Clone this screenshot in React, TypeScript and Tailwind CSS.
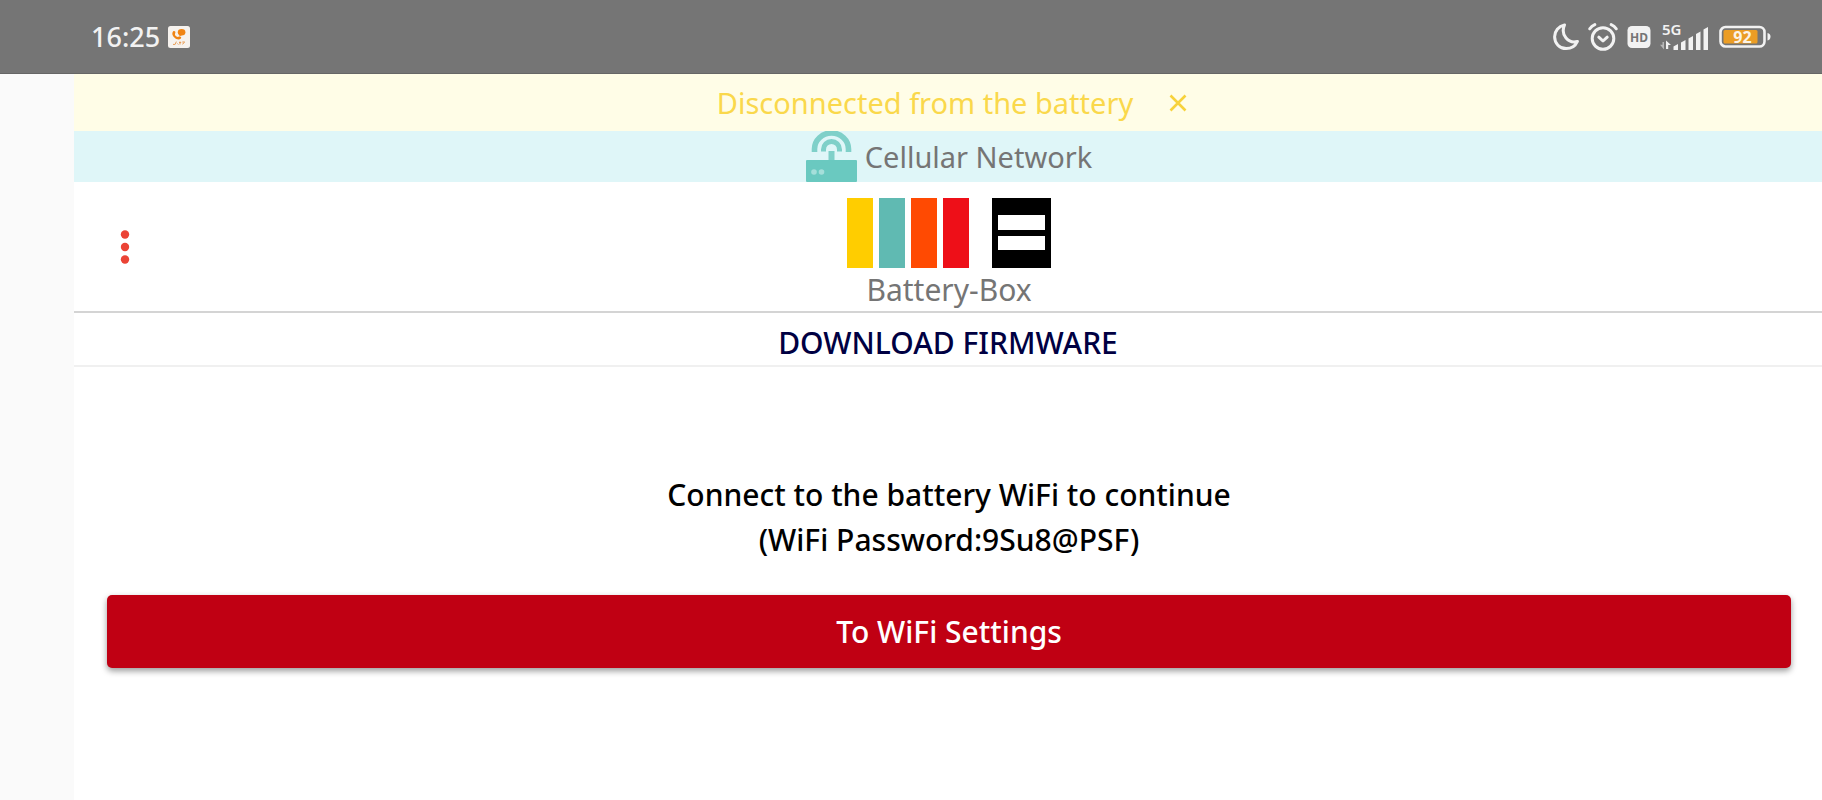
import React from "react";

function CallAppIcon() {
  return (
    <svg width="22" height="22" viewBox="0 0 22 22" role="img" aria-label="Call notification">
      <rect width="22" height="22" rx="2.500" fill="#f6f2ee" />
      <ellipse cx="13.600" cy="6.300" rx="3.800" ry="3.200" fill="#f08414" />
      <path d="M5 5.400c1.500-.9 2.800.2 2.300 1.500-.8 1.200-.3 2.700 1.200 3.700 1 .8 1.800.3 3-.1 1.500-.2 2.200 1.100 1.400 2-1.800 1.500-4.500 1-6.300-.8C4.300 9.800 3.600 7 5 5.400Z" fill="#f08414" />
      <path d="M12 8.500l-1.200 2 3-1.200Z" fill="#f08414" />
      <path d="M5 18.400h2.200M8.300 15.600l-1 2.600M9.500 17.500l.8 1M11 16.500h2.200M12 15.500v3M14.300 16h2.500M14.300 18.200l2.200-1.700" stroke="#e89a50" strokeWidth="1" fill="none" />
    </svg>
  );
}

function MoonIcon() {
  return (
    <svg width="26" height="28" viewBox="0 0 26 28" fill="none" role="img" aria-label="Do not disturb">
      <path d="M11.500 2C5.500 3.200 1.600 8 1.600 13.800c0 6.600 5 11.800 11.600 11.800 5 0 9.200-2.700 11.200-7.200-8.700 2.600-17.300-6.200-12.900-16.400Z" stroke="#f2f2f2" strokeWidth="3" strokeLinejoin="round" />
    </svg>
  );
}

function AlarmIcon() {
  return (
    <svg width="30" height="28" viewBox="0 0 30 28" fill="none" stroke="#f2f2f2" strokeLinecap="round" strokeLinejoin="round" role="img" aria-label="Alarm">
      <circle cx="15" cy="15.500" r="10.800" strokeWidth="3" />
      <path d="M10.800 14.200l4.200 3.800 4.200-3.800" strokeWidth="3" />
      <path d="M1.800 5.800C3 3.800 4.600 2.500 6.800 1.600M28.200 5.800C27 3.800 25.400 2.500 23.200 1.600" strokeWidth="3" />
    </svg>
  );
}

function HdIcon() {
  return (
    <svg width="24" height="22" viewBox="0 0 24 22" role="img" aria-label="HD voice">
      <rect x="0.500" width="23" height="22" rx="4.500" fill="#f2f2f2" />
      <text x="12" y="15.500" textAnchor="middle" fontSize="12" fontWeight="700" fill="#757575">HD</text>
    </svg>
  );
}

function SignalIcon() {
  return (
    <svg width="50" height="34" viewBox="0 -4 50 34" role="img" aria-label="5G signal">
      <text x="2" y="11" fontSize="15" fontWeight="600" fill="#f2f2f2">5G</text>
      <path d="M4 18v7.500L0 20.800h2.500V18Z" fill="#b8b8b8" />
      <path d="M6 25v-8.500l5 4.500H8.200v4Z" fill="#f2f2f2" />
      <g fill="#f2f2f2">
        <path d="M13.500 22.500l4.500-2.500v6h-4.500Z" />
        <path d="M21 18.500l4.500-2.500v10h-4.500Z" />
        <path d="M28.500 14.500l4.500-2.500v14h-4.500Z" />
        <path d="M36 10l4.500-2.500v18.500h-4.500Z" />
        <path d="M43.500 5.500l4.500-2.500v23h-4.500Z" />
      </g>
    </svg>
  );
}

function BatteryIcon() {
  return (
    <svg width="52" height="24" viewBox="0 0 52 24" role="img" aria-label="Battery 92 percent">
      <rect x="1.500" y="2" width="44" height="19.500" rx="5" fill="none" stroke="#f2f2f2" strokeWidth="2.600" />
      <rect x="4.500" y="5" width="34" height="13.500" rx="1.500" fill="#eb9d25" />
      <path d="M48.500 8c2 .4 3 1.800 3 3.700s-1 3.300-3 3.700Z" fill="#f2f2f2" />
      <text x="23.500" y="17.500" textAnchor="middle" fontSize="16" fontWeight="700" fill="#fbf3e6">92</text>
    </svg>
  );
}

function RouterIcon() {
  return (
    <svg width="51" height="51" viewBox="0 0 51 51" fill="none" aria-hidden="true">
      <path d="M8.500 21v-3a17 16 0 0 1 34 0v3" stroke="#7fd0c9" strokeWidth="5.600" />
      <path d="M17.500 20.500v-2a8 8 0 0 1 16 0v2" stroke="#7fd0c9" strokeWidth="5" />
      <path d="M25.500 20v10" stroke="#7fd0c9" strokeWidth="6" />
      <rect y="29" width="51" height="22" rx="1" fill="#6ac9c0" />
      <circle cx="8" cy="41" r="2.800" fill="#a5dfda" />
      <circle cx="15.500" cy="41" r="2.800" fill="#a5dfda" />
    </svg>
  );
}

function BatteryBoxLogo() {
  return (
    <svg width="204" height="70" viewBox="0 0 204 70" role="img" aria-label="Battery-Box logo">
      <rect x="0" width="26" height="70" fill="#ffcd00" />
      <rect x="32" width="26" height="70" fill="#60bab2" />
      <rect x="64" width="26" height="70" fill="#ff4a02" />
      <rect x="96" width="26" height="70" fill="#ee0f18" />
      <rect x="145" width="59" height="70" fill="#000" />
      <rect x="151" y="17" width="47" height="15" fill="#fff" />
      <rect x="151" y="38" width="47" height="14" fill="#fff" />
    </svg>
  );
}

function StatusBar() {
  return (
    <div className="flex h-[74px] items-center justify-between border-b border-[#666666] bg-[#757575] pr-[51px] pl-[91px] text-[#f2f2f2]">
      <div className="flex items-center gap-2">
        <time className="text-[27px] leading-8 font-medium">16:25</time>
        <CallAppIcon />
      </div>
      <div className="flex items-center gap-[9px]">
        <MoonIcon />
        <AlarmIcon />
        <HdIcon />
        <SignalIcon />
        <BatteryIcon />
      </div>
    </div>
  );
}

export default function App() {
  return (
    <div className="flex min-h-screen flex-col bg-white font-['Noto_Sans','Open_Sans',sans-serif]">
      <StatusBar />
      <div className="flex grow">
        <div className="w-[74px] shrink-0 bg-[#fafafa]" />
        <div className="min-w-0 grow">
          <div role="status" className="flex h-[57px] items-center justify-center gap-9 bg-[#fffde7] pl-2 text-[29px] leading-10 text-[#fad84b]">
            <span>Disconnected from the battery</span>
            <button type="button" aria-label="Dismiss" className="flex">
              <svg width="18" height="18" viewBox="0 0 18 18" stroke="#f7d23c" strokeWidth="2.600" aria-hidden="true">
                <path d="M1.500 1.500l15 15M16.500 1.500l-15 15" />
              </svg>
            </button>
          </div>
          <div className="flex h-[51px] items-center justify-center gap-2 bg-[#dff6f8] pl-0.5 text-[29px] leading-10 text-[#757575]">
            <RouterIcon />
            <span>Cellular Network</span>
          </div>
          <header className="grid grid-cols-[1fr_auto_1fr] items-center border-b-2 border-[#d4d4d4] pt-4">
            <button type="button" aria-label="Menu" className="mb-4 ml-[39px] flex h-10 w-6 items-center justify-center">
              <svg width="10" height="34" viewBox="0 0 10 34" fill="#eb4335" aria-hidden="true">
                <circle cx="5" cy="4.500" r="4.200" />
                <circle cx="5" cy="17" r="4.200" />
                <circle cx="5" cy="29.500" r="4.200" />
              </svg>
            </button>
            <div className="flex flex-col items-center pl-0.5">
              <BatteryBoxLogo />
              <p className="text-[30px] leading-[43px] text-[#757575]">Battery-Box</p>
            </div>
          </header>
          <h1 className="border-b-2 border-[#f0f0f0] pt-[10px] pb-0.5 text-center text-[30px] leading-10 font-medium text-[#000042]">
            DOWNLOAD FIRMWARE
          </h1>
          <main className="pt-[105px] pr-[31px] pl-[33px]">
            <p className="text-center text-[30px] leading-[45px] font-medium text-black">
              Connect to the battery WiFi to continue
              <br />
              (WiFi Password:9Su8@PSF)
            </p>
            <button
              type="button"
              className="mt-[33px] h-[73px] w-full rounded-[5px] bg-[#c00013] text-[30px] leading-10 font-medium text-white shadow-[0_3px_6px_rgba(0,0,0,0.4)]"
            >
              To WiFi Settings
            </button>
          </main>
        </div>
      </div>
    </div>
  );
}
